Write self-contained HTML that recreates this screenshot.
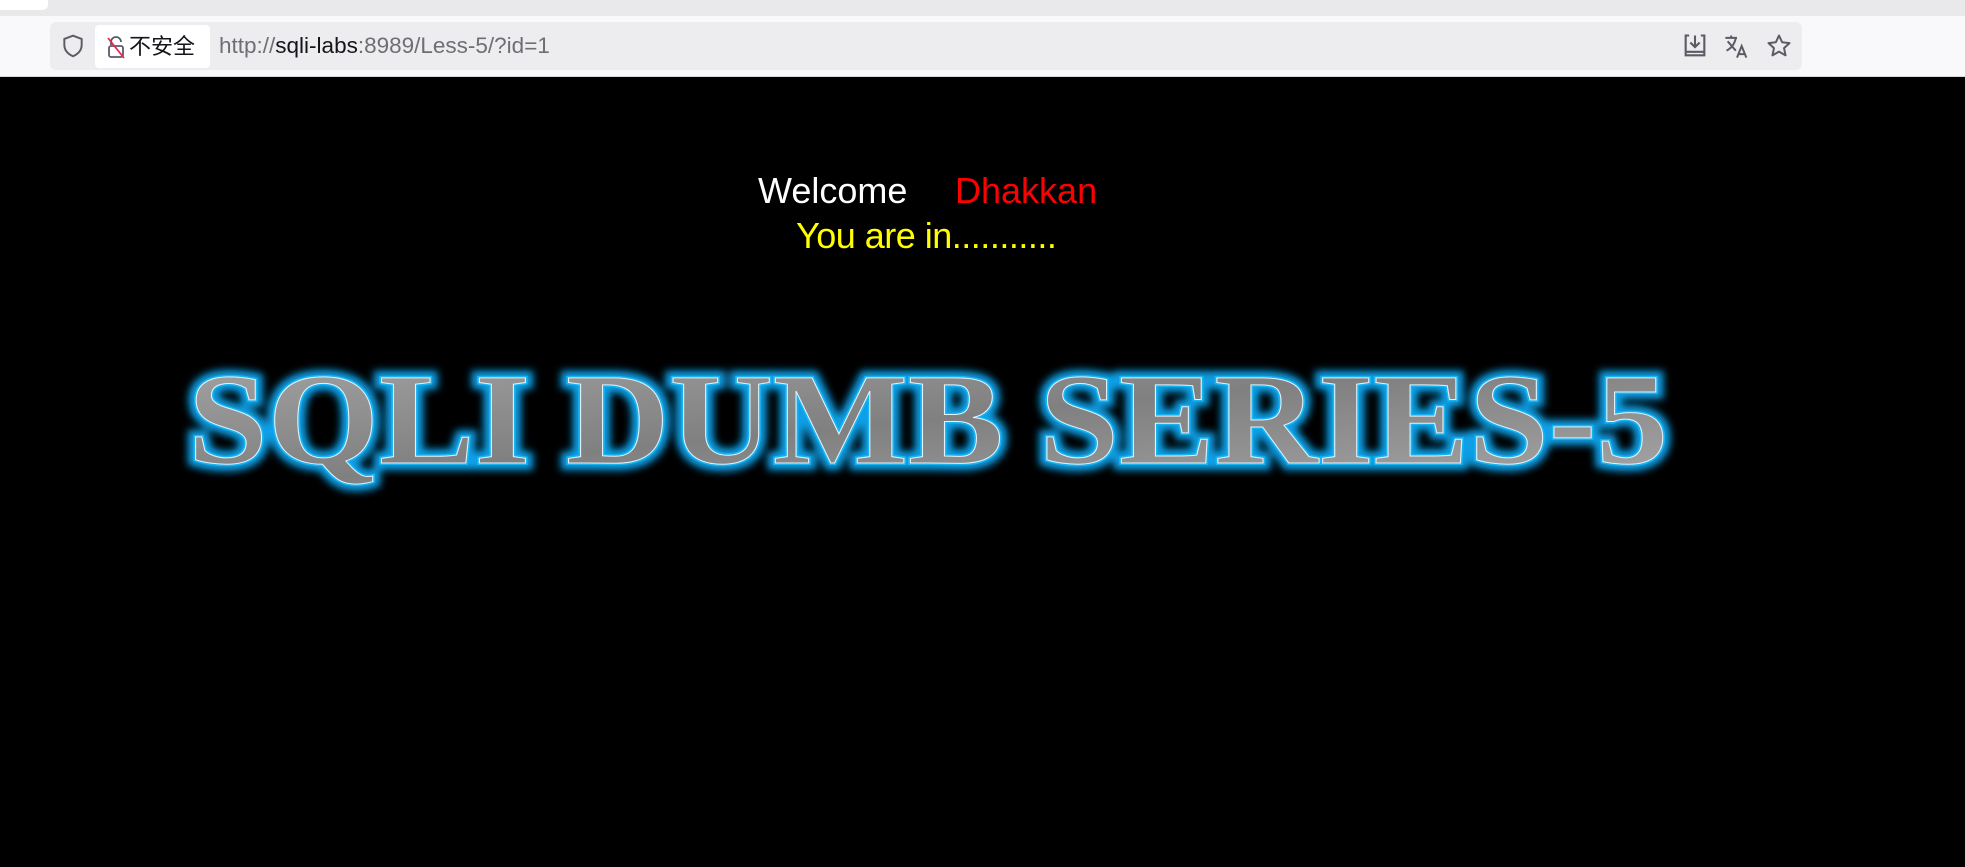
<!DOCTYPE html>
<html><head><meta charset="utf-8"><style>
html,body{margin:0;padding:0;width:1965px;height:867px;overflow:hidden;background:#000;font-family:"Liberation Sans","Noto Sans CJK SC",sans-serif}
.tabs{position:absolute;left:0;top:0;width:1965px;height:16px;background:#e9e9ec}
.tab{position:absolute;left:0;top:0;width:48px;height:10px;background:#fff;border-radius:0 0 5px 0}
.bar{position:absolute;left:0;top:16px;width:1965px;height:60px;background:#f9f9fb;border-bottom:1px solid #d8d8dc}
.url{position:absolute;left:50px;top:6px;width:1752px;height:48px;background:#ededf0;border-radius:6px}
.ins{position:absolute;left:45px;top:3px;width:115px;height:43px;background:#fff;border-radius:4px;font-size:22px;color:#15141a;line-height:43px;white-space:nowrap}
.utext{position:absolute;left:169px;top:0;line-height:48px;font-size:22.5px;color:#6e6e75;white-space:nowrap}
.utext b{font-weight:normal;color:#15141a}
.w{position:absolute;top:170px;left:758px;font-size:36px;color:#fff;white-space:nowrap}
.d{position:absolute;top:170px;left:955px;font-size:36px;color:#f00;white-space:nowrap}
.y{position:absolute;top:215px;left:796px;font-size:36px;color:#ff0;white-space:nowrap;letter-spacing:-0.5px}
</style></head><body>
<div class="tabs"><div class="tab"></div></div>
<div class="bar"><div class="url">
<svg style="position:absolute;left:10px;top:11px" width="26" height="26" viewBox="0 0 24 24"><path d="M12 2.5 L20 5.5 V11 C20 16 16.5 19.5 12 21.5 C7.5 19.5 4 16 4 11 V5.5 Z" fill="none" stroke="#5b5b66" stroke-width="1.8"/></svg>
<div class="ins">
<svg style="position:absolute;left:10px;top:9px" width="22" height="26" viewBox="0 0 22 24"><path d="M6 10 V7 a5 5 0 0 1 10 0" fill="none" stroke="#5b5b66" stroke-width="1.8"/><rect x="4" y="11" width="14" height="11" rx="2" fill="none" stroke="#5b5b66" stroke-width="1.8"/><path d="M3 3 L19 23" stroke="#e22850" stroke-width="1.8"/></svg>
<span style="position:absolute;left:34px">不安全</span></div>
<div class="utext">http://<b>sqli-labs</b>:8989/Less-5/?id=1</div>
<svg style="position:absolute;left:1631px;top:10px" width="28" height="28" viewBox="0 0 24 24"><path d="M7 3 H4 V20 H20 V3 H17" fill="none" stroke="#5b5b66" stroke-width="1.8"/><path d="M12 3 V13 M8 9 L12 13 L16 9 M4 17 H20" fill="none" stroke="#5b5b66" stroke-width="1.8"/></svg>
<svg style="position:absolute;left:1673px;top:10px" width="28" height="28" viewBox="0 0 24 24"><path d="M2 5 H12 M7 3 V5 M4 8 L11 16 M11 5 C10 10 7 14 3 16" fill="none" stroke="#5b5b66" stroke-width="1.7"/><path d="M12 22 L16 12 L20 22 M13.5 19 H18.5" fill="none" stroke="#5b5b66" stroke-width="1.7"/></svg>
<svg style="position:absolute;left:1715px;top:10px" width="28" height="28" viewBox="0 0 24 24"><path d="M12 3 L14.7 8.8 L21 9.5 L16.3 13.8 L17.6 20 L12 16.8 L6.4 20 L7.7 13.8 L3 9.5 L9.3 8.8 Z" fill="none" stroke="#5b5b66" stroke-width="1.7" stroke-linejoin="round"/></svg>
</div></div>
<div class="w">Welcome</div><div class="d">Dhakkan</div><div class="y">You are in...........</div>
<svg style="position:absolute;left:0;top:340px" width="1965" height="160" viewBox="0 340 1965 160">
<defs><linearGradient id="g" x1="0" y1="0" x2="1" y2="1"><stop offset="0" stop-color="#a5a5a5"/><stop offset=".5" stop-color="#808080"/><stop offset="1" stop-color="#a8a8a8"/></linearGradient>
<filter id="f" x="-5%" y="-30%" width="110%" height="160%"><feGaussianBlur stdDeviation="4"/></filter></defs>
<text x="188" y="463" font-family="Liberation Serif" font-weight="bold" font-size="130" textLength="1480" lengthAdjust="spacingAndGlyphs" fill="#0aa0e8" stroke="#0aa0e8" stroke-width="14" filter="url(#f)">SQLI DUMB SERIES-5</text>
<text x="188" y="463" font-family="Liberation Serif" font-weight="bold" font-size="130" textLength="1480" lengthAdjust="spacingAndGlyphs" fill="url(#g)" stroke="#18b4f0" stroke-width="4">SQLI DUMB SERIES-5</text>
<text x="188" y="463" font-family="Liberation Serif" font-weight="bold" font-size="130" textLength="1480" lengthAdjust="spacingAndGlyphs" fill="url(#g)" stroke="#e0f4ff" stroke-width="1">SQLI DUMB SERIES-5</text>
</svg>
</body></html>
